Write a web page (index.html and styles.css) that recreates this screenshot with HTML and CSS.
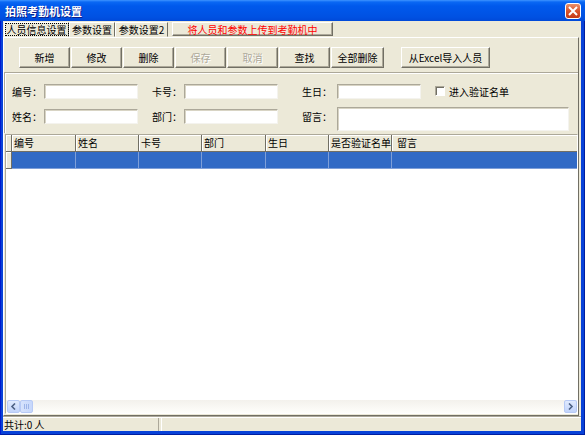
FILE: index.html
```html
<!DOCTYPE html>
<html>
<head>
<meta charset="utf-8">
<link rel="stylesheet" href="styles.css">
</head>
<body>
<div class="window">
  <div class="titlebar">
    <span class="title">拍照考勤机设置</span>
    <span class="close"><svg width="10" height="10" viewBox="0 0 10 10"><path d="M1 1L9 9M9 1L1 9" stroke="#fff" stroke-width="2"/></svg></span>
  </div>
  <div class="client">
    <div class="tabs">
      <div class="tab active"><span class="focus">人员信息设置</span></div>
      <div class="tab t2">参数设置</div>
      <div class="tab t3">参数设置2</div>
      <div class="upload">将人员和参数上传到考勤机中</div>
    </div>
    <div class="panel">
      <div class="toolbar">
        <div class="btn">新增</div>
        <div class="btn">修改</div>
        <div class="btn">删除</div>
        <div class="btn disabled">保存</div>
        <div class="btn disabled">取消</div>
        <div class="btn">查找</div>
        <div class="btn wide">全部删除</div>
        <div class="btn excel">从Excel导入人员</div>
      </div>
      <div class="form">
        <div class="row">
          <span class="lbl">编号：</span><div class="field w94"></div>
          <span class="lbl l2">卡号：</span><div class="field w94"></div>
          <span class="lbl l3">生日：</span><div class="field w84"></div>
          <span class="check"></span><span class="chklbl">进入验证名单</span>
        </div>
        <div class="row row2">
          <span class="lbl">姓名：</span><div class="field w94"></div>
          <span class="lbl l2">部门：</span><div class="field w94"></div>
          <span class="lbl l3">留言：</span><div class="field memo"></div>
        </div>
      </div>
      <div class="grid">
        <div class="thead">
          <div class="hc ind"></div>
          <div class="hc">编号</div>
          <div class="hc">姓名</div>
          <div class="hc">卡号</div>
          <div class="hc">部门</div>
          <div class="hc">生日</div>
          <div class="hc">是否验证名单</div>
          <div class="hc last">留言</div>
        </div>
        <div class="trow">
          <div class="rc ind"></div>
          <div class="rc"></div>
          <div class="rc"></div>
          <div class="rc"></div>
          <div class="rc"></div>
          <div class="rc"></div>
          <div class="rc"></div>
          <div class="rc last"></div>
        </div>
        <div class="empty"></div>
        <div class="hscroll">
          <div class="sbtn"><svg width="7" height="7" viewBox="0 0 7 7"><path d="M5 0.5L2 3.5L5 6.5" fill="none" stroke="#4D6185" stroke-width="1.6"/></svg></div>
          <div class="thumb"><svg width="5" height="5" viewBox="0 0 5 5"><path d="M0.5 0V5M2.5 0V5M4.5 0V5" stroke="#9DB4E8" stroke-width="1"/></svg></div>
          <div class="track"></div>
          <div class="sbtn"><svg width="7" height="7" viewBox="0 0 7 7"><path d="M2 0.5L5 3.5L2 6.5" fill="none" stroke="#4D6185" stroke-width="1.6"/></svg></div>
        </div>
      </div>
    </div>
    <div class="status">
      <div class="sp1">共计:0 人</div>
      <div class="sp2"></div>
    </div>
  </div>
</div>
</body>
</html>
```
FILE: styles.css
```css
* { box-sizing: border-box; margin: 0; padding: 0; }
html, body { margin: 0; width: 585px; height: 435px; overflow: hidden; }
body {
  font-family: "Noto Sans CJK SC", "Noto Sans", sans-serif;
  font-size: 10px;
  color: #000;
  background: #0A3FD6;
}
.window {
  width: 585px;
  height: 435px;
  background: #0842D8;
  border-left: 1px solid #0019CF;
  border-right: 1px solid #001EA0;
  border-bottom: 1px solid #001EA0;
  display: flex;
  flex-direction: column;
}
.titlebar {
  height: 21px;
  margin-left: -1px;
  margin-right: -1px;
  background: linear-gradient(to bottom, #3E94FF 0px, #0A68F4 2px, #0059EC 6px, #0055E7 12px, #0051E2 17px, #0049D8 21px);
  display: flex;
  align-items: center;
  padding-left: 5px;
  flex: none;
}
.title {
  color: #fff;
  font-weight: bold;
  font-size: 11px;
  text-shadow: 1px 1px #0A1E8C;
}
.close {
  margin-left: auto;
  margin-right: 4px;
  width: 16px;
  height: 16px;
  border: 1px solid #fff;
  border-radius: 3px;
  background: linear-gradient(to bottom, #E8916C 0%, #D9542B 50%, #C43A17 100%);
  display: flex;
  align-items: center;
  justify-content: center;
}
.client {
  flex: 1;
  margin: 0 3px 3px 2px;
  background: #ECE9D8;
  display: flex;
  flex-direction: column;
}
.tabs {
  display: flex;
  height: 16px;
  padding-top: 1px;
  padding-left: 1px;
  flex: none;
}
.tab {
  height: 15px;
  border: 1px solid;
  border-color: #fff #716F64 transparent #fff;
  display: flex;
  align-items: center;
  justify-content: center;
  white-space: nowrap;
  width: 65px;
}
.tab.t2 { width: 46px; }
.tab.t3 { width: 53px; }
.focus {
  border: 1px dotted #000;
  padding: 0 1px;
  line-height: 11px;
}
.upload {
  margin-left: 4px;
  width: 161px;
  height: 14px;
  border: 1px solid;
  border-color: #fff #716F64 #716F64 #fff;
  box-shadow: inset -1px -1px #ACA899;
  color: #FF0000;
  display: flex;
  align-items: center;
  justify-content: center;
  white-space: nowrap;
}
.panel {
  flex: 1;
  margin-right: 2px;
  border: 1px solid;
  border-color: #fff #716F64 #716F64 #fff;
  display: flex;
  flex-direction: column;
  padding-bottom: 1px;
}
.toolbar {
  display: flex;
  height: 34px;
  padding: 9px 0 4px 15px;
  flex: none;
}
.btn {
  width: 51px;
  height: 21px;
  margin-right: 1px;
  border: 1px solid;
  border-color: #fff #716F64 #716F64 #fff;
  box-shadow: inset -1px -1px #ACA899;
  display: flex;
  align-items: center;
  justify-content: center;
  white-space: nowrap;
}
.btn.disabled { color: #ACA899; text-shadow: 1px 1px #fff; }
.btn.wide { width: 53px; }
.btn.excel { width: 89px; margin-left: 16px; }
.form {
  height: 61px;
  border-top: 1px solid #ACA899;
  border-left: 1px solid #ACA899;
  box-shadow: inset 1px 1px #fff;
  padding: 10px 0 0 7px;
  display: flex;
  flex-direction: column;
  gap: 8px;
  flex: none;
}
.row {
  display: flex;
  align-items: center;
  height: 16px;
}
.row2 {
  height: 24px;
  align-items: flex-start;
}
.row2 .lbl { margin-top: 2px; line-height: 16px; }
.row2 .field.w94 { margin-top: 2px; }
.lbl {
  width: 32px;
  white-space: nowrap;
  flex: none;
}
.lbl.l2 { margin-left: 14px; }
.lbl.l3 { margin-left: 24px; width: 35px; }
.field {
  height: 15px;
  background: #fff;
  border: 1px solid;
  border-color: #ACA899 #F4F3EE #F4F3EE #ACA899;
  box-shadow: inset 1px 1px #D8D4C4;
  flex: none;
}
.w94 { width: 94px; }
.w84 { width: 84px; }
.memo { width: 232px; height: 24px; }
.check {
  width: 10px;
  height: 10px;
  margin-left: 14px;
  background: #fff;
  border: 1px solid;
  border-color: #ACA899 #fff #fff #ACA899;
  box-shadow: inset 1px 1px #716F64;
  flex: none;
}
.chklbl { margin-left: 4px; white-space: nowrap; }
.grid {
  flex: 1;
  margin: 1px 0 0 1px;
  border: 1px solid;
  border-color: #ACA899 #fff #fff #ACA899;
  background: #fff;
  display: flex;
  flex-direction: column;
}
.thead, .trow {
  display: grid;
  grid-template-columns: 6px 64px 63px 63px 64px 63px 63px 1fr;
  height: 17px;
  flex: none;
}
.hc {
  background: #ECE9D8;
  border-right: 1px solid #716F64;
  border-bottom: 1px solid #716F64;
  box-shadow: inset 1px 1px #fff;
  padding-left: 2px;
  line-height: 15px;
  white-space: nowrap;
  overflow: hidden;
}
.hc.last { border-right: none; padding-left: 5px; }
.rc {
  background: #316AC5;
  border-right: 1px solid #7E9FD8;
  border-bottom: 1px solid #7E9FD8;
}
.rc.last { border-right: none; }
.rc.ind {
  background: #ECE9D8;
  border-right: 1px solid #716F64;
  border-bottom: 1px solid #716F64;
  box-shadow: inset 1px 1px #fff;
}
.empty { flex: 1; background: #fff; }
.hscroll {
  height: 13px;
  display: flex;
  background: linear-gradient(to bottom, #F3F1EC, #FEFEFB);
  padding-left: 1px;
  flex: none;
}
.sbtn {
  width: 13px;
  height: 13px;
  border: 1px solid #B7CAF5;
  border-radius: 2px;
  background: linear-gradient(to bottom, #E0EAFE, #C2D4FB);
  display: flex;
  align-items: center;
  justify-content: center;
  flex: none;
}
.thumb {
  width: 13px;
  height: 13px;
  border: 1px solid #B7CAF5;
  border-radius: 2px;
  background: linear-gradient(to right, #D7E3FC, #C6D7FB);
  display: flex;
  align-items: center;
  justify-content: center;
  flex: none;
}
.track { flex: 1; }
.status {
  height: 15px;
  border-top: 1px solid #ACA899;
  box-shadow: inset 0 1px #fff;
  display: flex;
  flex: none;
  padding-top: 1px;
}
.sp1 {
  width: 156px;
  line-height: 13px;
  padding-left: 1px;
  border-right: 1px solid #ACA899;
  white-space: nowrap;
}
.sp2 {
  flex: 1;
  margin-left: 2px;
  border-left: 1px solid #fff;
}
```
